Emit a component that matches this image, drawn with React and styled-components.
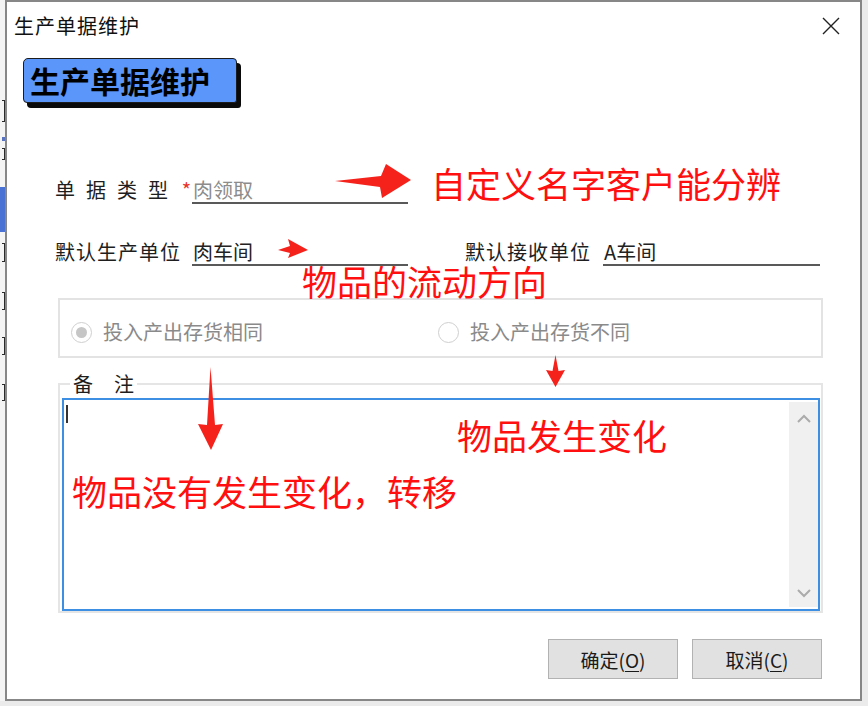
import styled, { createGlobalStyle } from "styled-components";

const CJK = `"Noto Sans CJK SC", "Noto Sans", sans-serif`;

const GlobalStyle = createGlobalStyle`
  html, body {
    margin: 0;
    padding: 0;
    background: #ffffff;
  }
  body {
    font-family: ${CJK};
  }
  * {
    box-sizing: border-box;
  }
`;

const Screen = styled.div`
  position: relative;
  width: 868px;
  height: 706px;
  display: flex;
  align-items: flex-start;
  background: #ebebeb;
  overflow: hidden;
`;

// the sliver of the window behind the dialog
const LeftStrip = styled.div`
  flex: none;
  width: 5px;
  height: 701px;
  background: #f4f4f4;
  display: flex;
  flex-direction: column;
  align-items: flex-end;
`;

const StripBit = styled.div`
  flex: none;
  height: ${(p) => p.$h}px;
  width: ${(p) => (p.$kind === "blue" ? 5 : 3)}px;
  background: ${(p) =>
    p.$kind === "blue" ? "#4a72d4" : p.$kind === "line" ? "#5a74c2" : "transparent"};
  border: ${(p) => (p.$kind === "dark" ? "1.5px solid #2a2a2a" : "none")};
  border-left: none;
`;

const Dialog = styled.div`
  flex: none;
  width: 857px;
  height: 701px;
  background: #ffffff;
  border: 2px solid #878787;
  display: flex;
  flex-direction: column;
`;

const TitleBar = styled.div`
  height: 46px;
  display: flex;
  align-items: center;
  justify-content: space-between;
  padding: 0 20px 0 7px;
`;

const Title = styled.span`
  font-size: 20px;
  letter-spacing: 1px;
  color: #111;
`;

const CloseButton = styled.span`
  display: flex;
  width: 18px;
  height: 18px;
  margin-top: 2px;
`;

const Badge = styled.div`
  align-self: flex-start;
  margin: 10px 0 0 16px;
  width: 214px;
  height: 45px;
  padding-left: 6px;
  background: #5b96fa;
  border: 1px solid #1c1c1c;
  border-radius: 5px 4px 3px 4px;
  box-shadow: 4px 5px 0 #0a0a0a;
  font-size: 30px;
  font-weight: 700;
  line-height: 43px;
  color: #000;
`;

const Body = styled.div`
  display: flex;
  flex-direction: column;
  margin-top: 75px;
  padding: 0 37px 0 51px;
`;

const FieldRow = styled.div`
  display: flex;
  gap: 57px;
  margin-left: -3px;
  margin-top: ${(p) => p.$gap || 0}px;
`;

const Field = styled.div`
  display: flex;
  align-items: flex-end;
`;

const Label = styled.span`
  display: flex;
  width: ${(p) => p.$w}px;
  padding-bottom: 2px;
  font-size: 20px;
  line-height: 24px;
  letter-spacing: ${(p) => p.$spacing || 1}px;
  color: #1e1e1e;
  white-space: nowrap;
`;

const Star = styled.span`
  margin-left: auto;
  margin-right: 1px;
  letter-spacing: 0;
  color: #e8332b;
`;

const Input = styled.span`
  width: ${(p) => p.$w}px;
  padding-left: 1px;
  font-size: 20px;
  line-height: 24px;
  color: ${(p) => (p.$muted ? "#8c8c8c" : "#222")};
  border-bottom: 2.5px solid #595959;
  white-space: nowrap;
`;

const RadioGroup = styled.div`
  margin-top: 32px;
  height: 60px;
  border: 2px solid #e3e3e3;
  display: grid;
  grid-template-columns: 367px 1fr;
  align-items: center;
  padding: 8px 0 0 11px;
`;

const RadioItem = styled.label`
  display: flex;
  align-items: center;
  gap: 11px;
  font-size: 20px;
  line-height: 24px;
  color: #8a8a8a;
`;

const RadioCircle = styled.span`
  flex: none;
  width: 21px;
  height: 21px;
  border-radius: 50%;
  border: 1.5px solid #cfcfcf;
  background: #fff;
  display: grid;
  place-items: center;

  &::after {
    content: "";
    display: ${(p) => (p.$checked ? "block" : "none")};
    width: 11px;
    height: 11px;
    border-radius: 50%;
    background: #c6c6c6;
  }
`;

const MemoSet = styled.fieldset`
  margin: 12px 0 0;
  padding: 0 1px 0 2px;
  min-width: 0;
  border: 2px solid #e5e5e5;
`;

const MemoLegend = styled.legend`
  margin-left: 8px;
  padding: 0 3px;
  font-size: 20px;
  line-height: 28px;
  color: #1e1e1e;
`;

const LegendChar = styled.span`
  margin-right: ${(p) => p.$space || 0}px;
`;

const MemoBox = styled.div`
  height: 213px;
  border: 2px solid #3d8fe3;
  display: flex;
  background: #fff;
`;

const Caret = styled.span`
  width: 2px;
  height: 18px;
  margin: 5px 0 0 2px;
  background: #333;
`;

const ScrollTrack = styled.div`
  margin: 2px 0 2px auto;
  width: 29px;
  background: #f0f0f0;
  display: flex;
  flex-direction: column;
  justify-content: space-between;
  align-items: center;
  padding: 12px 0 9px;
`;

const ButtonRow = styled.div`
  margin-top: 26px;
  display: flex;
  justify-content: flex-end;
  gap: 14px;
  padding-right: 1px;
`;

const Button = styled.button`
  width: 130px;
  height: 40px;
  background: #e1e1e1;
  border: 1.5px solid #b2b2b2;
  font-family: ${CJK};
  font-size: 19px;
  color: #1a1a1a;
  padding: 0;

  u {
    text-underline-offset: 3px;
  }
`;

// red markup drawn over the screenshot
const NoteLayer = styled.div`
  position: absolute;
  inset: 0;
  pointer-events: none;
`;

const RedNote = styled.span`
  position: absolute;
  left: ${(p) => p.$x}px;
  top: ${(p) => p.$y}px;
  font-size: 35px;
  line-height: 0.85;
  color: #ff0f0f;
  white-space: nowrap;
`;

const Arrow = styled.svg`
  position: absolute;
  left: ${(p) => p.$x}px;
  top: ${(p) => p.$y}px;
  overflow: visible;
`;

const stripBits = [
  { h: 100 },
  { h: 22, kind: "dark" },
  { h: 15 },
  { h: 4, kind: "line" },
  { h: 7 },
  { h: 12, kind: "dark" },
  { h: 27 },
  { h: 45, kind: "blue" },
  { h: 11 },
  { h: 19, kind: "dark" },
  { h: 30 },
  { h: 18, kind: "dark" },
  { h: 27 },
  { h: 18, kind: "dark" },
  { h: 29 },
  { h: 17, kind: "dark" },
];

const ARROW_RED = "#f5211b";

export default function App() {
  return (
    <>
      <GlobalStyle />
      <Screen>
        <LeftStrip>
          {stripBits.map((b, i) => (
            <StripBit key={i} $h={b.h} $kind={b.kind} />
          ))}
        </LeftStrip>

        <Dialog>
          <TitleBar>
            <Title>生产单据维护</Title>
            <CloseButton>
              <svg width="18" height="18" viewBox="0 0 18 18">
                <path d="M1 1 L17 17 M17 1 L1 17" stroke="#222" strokeWidth="1.4" />
              </svg>
            </CloseButton>
          </TitleBar>

          <Badge>生产单据维护</Badge>

          <Body>
            <FieldRow>
              <Field>
                <Label $w={137} $spacing={11}>
                  单据类型<Star>*</Star>
                </Label>
                <Input $w={216} $muted>肉领取</Input>
              </Field>
            </FieldRow>

            <FieldRow $gap={36}>
              <Field>
                <Label $w={137}>默认生产单位</Label>
                <Input $w={216}>肉车间</Input>
              </Field>
              <Field>
                <Label $w={138}>默认接收单位</Label>
                <Input $w={217}>A车间</Input>
              </Field>
            </FieldRow>

            <RadioGroup>
              <RadioItem>
                <RadioCircle $checked />
                投入产出存货相同
              </RadioItem>
              <RadioItem>
                <RadioCircle />
                投入产出存货不同
              </RadioItem>
            </RadioGroup>

            <MemoSet>
              <MemoLegend>
                <LegendChar $space={21}>备</LegendChar>
                <LegendChar>注</LegendChar>
              </MemoLegend>
              <MemoBox>
                <Caret />
                <ScrollTrack>
                  <svg width="16" height="10" viewBox="0 0 16 10">
                    <polyline points="2,8 8,2 14,8" fill="none" stroke="#ababab" strokeWidth="2" />
                  </svg>
                  <svg width="16" height="10" viewBox="0 0 16 10">
                    <polyline points="2,2 8,8 14,2" fill="none" stroke="#ababab" strokeWidth="2" />
                  </svg>
                </ScrollTrack>
              </MemoBox>
            </MemoSet>

            <ButtonRow>
              <Button>
                确定(<u>O</u>)
              </Button>
              <Button>
                取消(<u>C</u>)
              </Button>
            </ButtonRow>
          </Body>
        </Dialog>

        <NoteLayer>
          <Arrow $x={335} $y={164} width="76" height="34" viewBox="0 0 76 34">
            <path d="M0 17 L46 12 L51 0 L76 16 L47 34 L45 23 Z" fill={ARROW_RED} />
          </Arrow>
          <RedNote $x={431} $y={168}>自定义名字客户能分辨</RedNote>

          <Arrow $x={278} $y={238} width="30" height="21" viewBox="0 0 30 21">
            <path d="M0 12 L12 8 L10 1 L30 12 L10 20 L12 15 Z" fill={ARROW_RED} />
          </Arrow>
          <RedNote $x={302} $y={266}>物品的流动方向</RedNote>

          <Arrow $x={545} $y={355} width="21" height="32" viewBox="0 0 21 32">
            <path d="M10.5 0 L13.5 16 L20 15 L10.5 32 L1 15 L7.5 16 Z" fill={ARROW_RED} />
          </Arrow>
          <RedNote $x={457} $y={420}>物品发生变化</RedNote>

          <Arrow $x={197} $y={367} width="27" height="84" viewBox="0 0 27 84">
            <path d="M13.5 0 L18 58 L26 57 L14 83 L1 57 L10 58 Z" fill={ARROW_RED} />
          </Arrow>
          <RedNote $x={72} $y={476}>物品没有发生变化，转移</RedNote>
        </NoteLayer>
      </Screen>
    </>
  );
}
